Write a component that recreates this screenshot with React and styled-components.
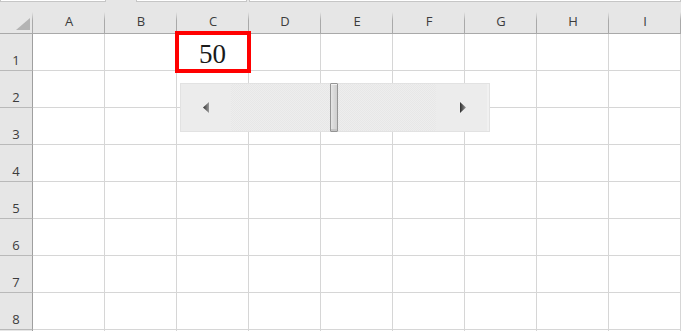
import React from 'react';
import styled, { createGlobalStyle } from 'styled-components';

const GlobalStyle = createGlobalStyle`
  body {
    margin: 0;
    background: #ffffff;
  }
`;

const COLUMNS = ['A', 'B', 'C', 'D', 'E', 'F', 'G', 'H', 'I'];
const ROWS = [1, 2, 3, 4, 5, 6, 7, 8];

const Sheet = styled.div`
  position: relative;
  width: 681px;
  height: 331px;
  overflow: hidden;
  background: #e6e6e6;
  font-family: 'Segoe UI', 'Open Sans', sans-serif;
`;

const FormulaStrip = styled.div`
  display: flex;
  height: 2px;
  background: #e6e6e6;
`;

const FormulaBox = styled.div`
  box-sizing: border-box;
  height: 2px;
  background: #ffffff;
  border: 1px solid #c6c6c6;
  border-top: none;
  margin-left: ${(p) => p.$offset || 0}px;
  width: ${(p) => (p.$width ? `${p.$width}px` : 'auto')};
  flex: ${(p) => (p.$width ? 'none' : '1')};
`;

const Grid = styled.div`
  display: grid;
  grid-template-columns: 33px repeat(9, 72px);
  grid-template-rows: 32px;
  grid-auto-rows: 37px;
  background: #ffffff;
`;

const HeaderCell = styled.div`
  position: relative;
  box-sizing: border-box;
  display: flex;
  align-items: flex-end;
  justify-content: center;
  padding-bottom: 4px;
  background: #e6e6e6;
  border-bottom: 1px solid #a9a9a9;
  color: #3c3c3c;
  font-size: 13px;
  line-height: 16px;

  &::after {
    content: '';
    position: absolute;
    right: 0;
    top: 10px;
    bottom: 0;
    width: 1px;
    background: linear-gradient(to bottom, rgba(171, 171, 171, 0), #a9a9a9 40%);
  }
`;

const Corner = styled(HeaderCell)`
  padding: 0;
`;

const CornerMark = styled.div`
  width: 0;
  height: 0;
  margin: 0 3px 3px auto;
  border-left: 14px solid transparent;
  border-bottom: 12px solid #b4b4b4;
`;

const RowHeader = styled.div`
  box-sizing: border-box;
  display: flex;
  align-items: flex-end;
  justify-content: center;
  padding-bottom: 2px;
  background: #e6e6e6;
  border-right: 1px solid #9f9f9f;
  border-bottom: 1px solid #b9b9b9;
  color: #3c3c3c;
  font-size: 13px;
  line-height: 16px;
`;

const Cell = styled.div`
  box-sizing: border-box;
  display: flex;
  align-items: flex-end;
  justify-content: center;
  border-right: 1px solid #d6d6d6;
  border-bottom: 1px solid #d6d6d6;
  background: #ffffff;
  color: #1a1a1a;
  font-family: 'Liberation Serif', 'Times New Roman', serif;
  font-size: 27px;
  line-height: normal;
`;

const Selection = styled.div`
  position: absolute;
  left: 175px;
  top: 31px;
  width: 76px;
  height: 42px;
  box-sizing: border-box;
  border: 4px solid #ff0000;
  pointer-events: none;
`;

const ScrollBar = styled.div`
  position: absolute;
  left: 180px;
  top: 83px;
  width: 310px;
  height: 49px;
  box-sizing: border-box;
  display: flex;
  border: 1px solid #e2e2e2;
  background: #ececec;
`;

const ScrollButton = styled.div`
  width: ${(p) => p.$width}px;
  flex: none;
  display: flex;
  align-items: center;
  justify-content: center;
  background: #ececec;
  box-shadow: ${(p) => (p.$end ? 'inset -2px 0 0 #f1f1f1' : 'none')};
`;

const Track = styled.div`
  position: relative;
  flex: 1;
  background-color: #ebebeb;
  background-image: repeating-conic-gradient(#e7e7e7 0 25%, #eeeeee 0 50%);
  background-size: 2px 2px;
`;

const Thumb = styled.div`
  position: absolute;
  top: -1px;
  bottom: -1px;
  width: 8px;
  box-sizing: border-box;
  border: 1px solid #959595;
  border-radius: 1px;
  background: linear-gradient(to right, #e6e6e6 0%, #dcdcdc 35%, #cfcfcf 100%);
  box-shadow: inset 0 1px 0 #f2f2f2, inset 0 -2px 0 #c4c4c4;
`;

const Arrow = ({ direction }) => (
  <svg width="6" height="11" viewBox="0 0 6 11">
    <defs>
      <linearGradient id={`arrow-${direction}`} x1="0" y1="0" x2="1" y2="0">
        <stop offset="0" stopColor="#2e2e2e" />
        <stop offset="1" stopColor="#9a9a9a" />
      </linearGradient>
    </defs>
    <polygon
      points={direction === 'left' ? '6,0 0,5.5 6,11' : '0,0 6,5.5 0,11'}
      fill={`url(#arrow-${direction})`}
    />
  </svg>
);

const TRACK_WIDTH = 205;
const THUMB_WIDTH = 8;

const HorizontalScroll = ({ value, min, max }) => {
  const left = ((value - min) / (max - min)) * (TRACK_WIDTH - THUMB_WIDTH);
  return (
    <ScrollBar>
      <ScrollButton $width={50}>
        <Arrow direction="left" />
      </ScrollButton>
      <Track>
        <Thumb style={{ left: `${left}px` }} />
      </Track>
      <ScrollButton $width={53} $end>
        <Arrow direction="right" />
      </ScrollButton>
    </ScrollBar>
  );
};

const App = () => {
  const value = 50;
  return (
    <>
      <GlobalStyle />
      <Sheet>
        <FormulaStrip>
          <FormulaBox $width={106} />
          <FormulaBox $offset={30} $width={111} />
          <FormulaBox $offset={2} />
        </FormulaStrip>
        <Grid>
          <Corner>
            <CornerMark />
          </Corner>
          {COLUMNS.map((col) => (
            <HeaderCell key={col}>{col}</HeaderCell>
          ))}
          {ROWS.map((row) => (
            <React.Fragment key={row}>
              <RowHeader>{row}</RowHeader>
              {COLUMNS.map((col) => (
                <Cell key={col}>{row === 1 && col === 'C' ? value : null}</Cell>
              ))}
            </React.Fragment>
          ))}
          {/* next row, only its top pixel shows */}
          <RowHeader />
          {COLUMNS.map((col) => (
            <Cell key={col} />
          ))}
        </Grid>
        <Selection />
        <HorizontalScroll value={value} min={0} max={100} />
      </Sheet>
    </>
  );
};

export default App;
